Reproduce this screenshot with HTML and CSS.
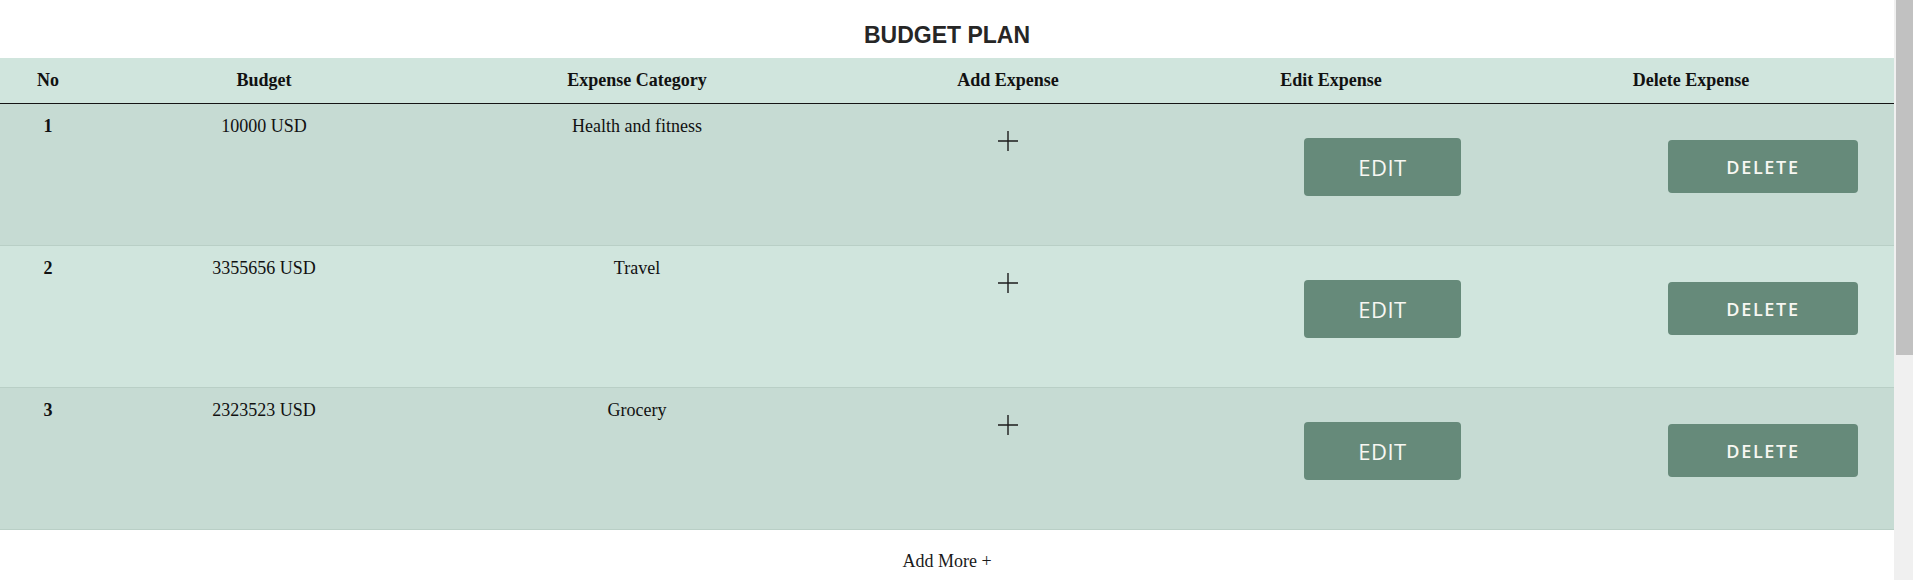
FILE: index.html
```html
<!DOCTYPE html>
<html lang="en">
<head>
<meta charset="utf-8">
<title>Budget Plan</title>
<link rel="stylesheet" href="styles.css">
</head>
<body>
<div class="app">
  <main class="page">
    <h1 class="title">BUDGET PLAN</h1>
    <div class="budget">
      <div class="row head">
        <div class="cell">No</div>
        <div class="cell">Budget</div>
        <div class="cell">Expense Category</div>
        <div class="cell">Add Expense</div>
        <div class="cell">Edit Expense</div>
        <div class="cell">Delete Expense</div>
      </div>
      <div class="row odd">
        <div class="cell num">1</div>
        <div class="cell">10000 USD</div>
        <div class="cell">Health and fitness</div>
        <div class="cell add"><svg class="plus" width="22" height="22" viewBox="0 0 22 22"><path d="M11 1v20M1 11h20"/></svg></div>
        <div class="cell edit"><button class="btn btn-edit">EDIT</button></div>
        <div class="cell del"><button class="btn btn-del">DELETE</button></div>
      </div>
      <div class="row even">
        <div class="cell num">2</div>
        <div class="cell">3355656 USD</div>
        <div class="cell">Travel</div>
        <div class="cell add"><svg class="plus" width="22" height="22" viewBox="0 0 22 22"><path d="M11 1v20M1 11h20"/></svg></div>
        <div class="cell edit"><button class="btn btn-edit">EDIT</button></div>
        <div class="cell del"><button class="btn btn-del">DELETE</button></div>
      </div>
      <div class="row odd">
        <div class="cell num">3</div>
        <div class="cell">2323523 USD</div>
        <div class="cell">Grocery</div>
        <div class="cell add"><svg class="plus" width="22" height="22" viewBox="0 0 22 22"><path d="M11 1v20M1 11h20"/></svg></div>
        <div class="cell edit"><button class="btn btn-edit">EDIT</button></div>
        <div class="cell del"><button class="btn btn-del">DELETE</button></div>
      </div>
    </div>
    <div class="add-more">Add More +</div>
  </main>
  <div class="scrollbar"><div class="thumb"></div></div>
</div>
</body>
</html>
```

FILE: styles.css
```css
html, body {
  margin: 0;
  padding: 0;
  background: #ffffff;
  overflow: hidden;
}

body {
  font-family: "Liberation Serif", "Times New Roman", serif;
  color: #111111;
}

.app {
  display: flex;
  height: 100vh;
  overflow: hidden;
}

.page {
  flex: 1;
  min-width: 0;
}

.scrollbar {
  width: 19px;
  flex: none;
  background: #f0f0f0;
}

.thumb {
  height: 355px;
  margin-left: 2px;
  background: #c1c1c1;
}

.title {
  margin: 0 0 9px;
  padding-top: 22px;
  height: 27px;
  line-height: 27px;
  text-align: center;
  font-family: "Liberation Sans", Arial, sans-serif;
  font-weight: bold;
  font-size: 23px;
  color: #262626;
}

.row {
  display: grid;
  grid-template-columns: 96px 336px 410px 332px 314px 1fr;
}

.head {
  height: 45px;
  background: #d0e5dd;
  border-bottom: 1px solid #151515;
  font-weight: bold;
  font-size: 18px;
  align-items: center;
}

.head .cell {
  text-align: center;
}

.odd {
  background: #c6dbd3;
}

.even {
  background: #d0e5dd;
}

.odd, .even {
  height: 141px;
  border-bottom: 1px solid #b9cfc6;
  font-size: 18px;
  line-height: 21px;
}

.odd .cell, .even .cell {
  padding-top: 12px;
  text-align: center;
}

.num {
  font-weight: bold;
}

.plus {
  display: block;
  margin: 14px auto 0;
  fill: none;
  stroke: #1c1c1c;
  stroke-width: 1.4;
}

.odd .edit, .even .edit {
  text-align: left;
  padding-left: 130px;
}

.odd .del, .even .del {
  text-align: left;
  padding-left: 180px;
}

.btn {
  display: flex;
  align-items: center;
  justify-content: center;
  border: none;
  border-radius: 4px;
  background: #668a7a;
  color: #f7f7f2;
  font-family: "Open Sans", "Segoe UI", sans-serif;
  padding: 0;
}

.btn-edit {
  width: 157px;
  height: 58px;
  margin-top: 22px;
  font-size: 22px;
  font-weight: 500;
  letter-spacing: 0.5px;
}

.btn-del {
  width: 190px;
  height: 53px;
  margin-top: 24px;
  font-size: 18px;
  font-weight: 600;
  letter-spacing: 1.7px;
}

.add-more {
  padding-top: 21px;
  line-height: 21px;
  font-size: 18px;
  text-align: center;
  color: #1a1a1a;
}
```
